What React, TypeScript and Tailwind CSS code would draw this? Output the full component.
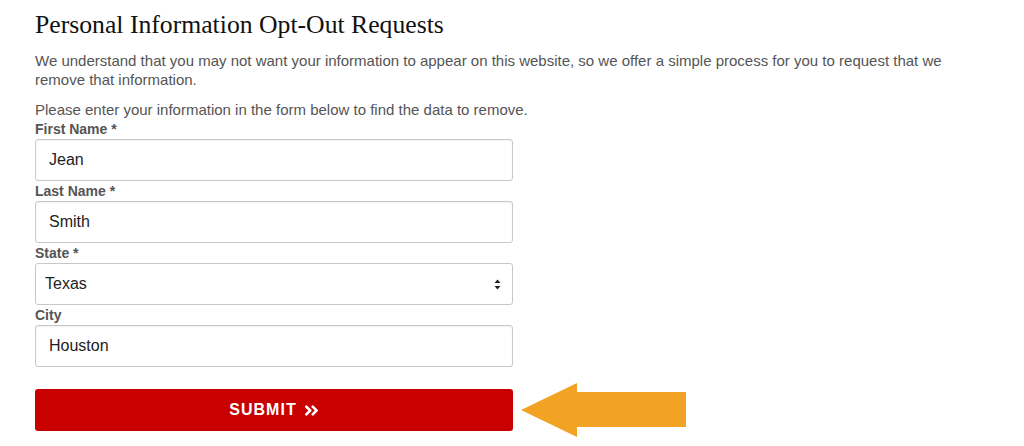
import { FaAngleDoubleRight } from "react-icons/fa";

const fields = [
  { label: "First Name *", value: "Jean" },
  { label: "Last Name *", value: "Smith" },
];

function Label({ children }: { children: React.ReactNode }) {
  return <div className="text-[14px] font-bold leading-[20px] text-[#555]">{children}</div>;
}

function TextBox({ value }: { value: string }) {
  return (
    <div className="flex h-[42px] w-[478px] items-center rounded-[3px] border border-[#c8c8c8] bg-white pl-[13px] text-[16px] text-[#222] shadow-[inset_0_1px_2px_rgba(0,0,0,0.06)]">
      {value}
    </div>
  );
}

export default function App() {
  return (
    <div className="h-[446px] w-[1024px] overflow-hidden bg-white font-['Liberation_Sans',Arial,sans-serif]">
      <div className="w-[960px] pl-[35px] pt-[8px]">
        <h1 className="font-['Liberation_Serif','Times_New_Roman',serif] text-[25.7px] leading-[34px] text-[#111]">
          Personal Information Opt-Out Requests
        </h1>
        <p className="mt-[9px] text-[15px] leading-[19px] text-[#555]">
          We understand that you may not want your information to appear on this website, so we offer a simple process for you to request that we remove that information.
        </p>
        <p className="mt-[11px] text-[15px] leading-[19px] text-[#555]">
          Please enter your information in the form below to find the data to remove.
        </p>

        <div className="flex flex-col">
          {fields.map((f) => (
            <div key={f.label} className="flex flex-col">
              <Label>{f.label}</Label>
              <TextBox value={f.value} />
            </div>
          ))}
          <Label>State *</Label>
          <div className="flex h-[42px] w-[478px] items-center justify-between rounded-[3px] border border-[#c8c8c8] bg-white pl-[9px] pr-[11px] text-[16px] text-[#222]">
            <span>Texas</span>
            <svg width="7" height="11" viewBox="0 0 7 11" fill="#222">
              <path d="M3.5 0.5 L6.5 4 L0.5 4 Z" />
              <path d="M0.5 7 L6.5 7 L3.5 10.5 Z" />
            </svg>
          </div>
          <Label>City</Label>
          <TextBox value="Houston" />
        </div>

        {/* button row; arrow is taller than the button so it sets the row height */}
        <div className="mt-[14px] flex items-center">
          <button className="flex h-[42px] w-[478px] items-center justify-center gap-[7px] rounded-[3px] bg-[#c90000] text-[16px] font-bold tracking-[1px] text-white">
            SUBMIT
            <FaAngleDoubleRight className="h-[17px] w-[15px]" />
          </button>
          <svg className="ml-[8px]" width="166" height="58" viewBox="0 0 166 58">
            <path d="M0 29 L56 2 L56 11 L165 11 L165 46 L56 46 L56 56 Z" fill="#f2a324" />
          </svg>
        </div>
      </div>
    </div>
  );
}
